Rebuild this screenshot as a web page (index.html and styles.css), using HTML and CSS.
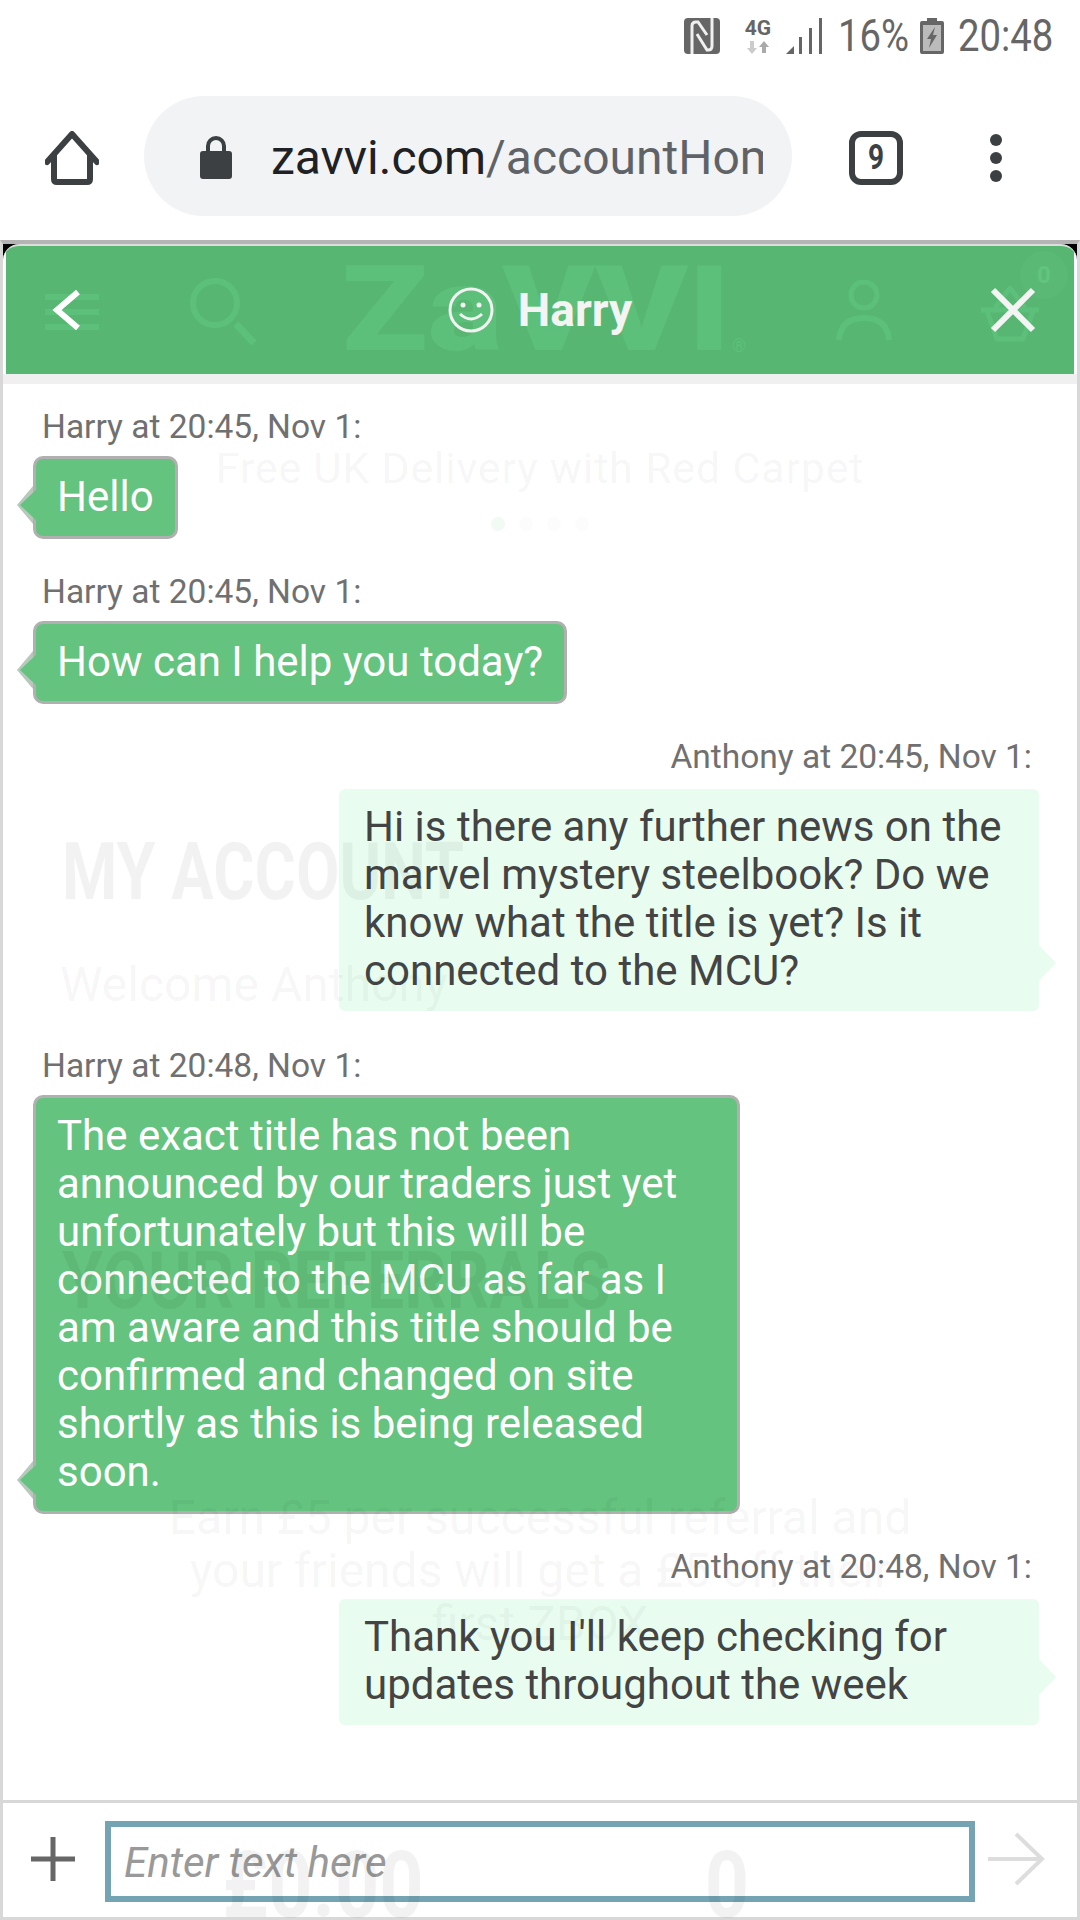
FILE: index.html
```html
<!DOCTYPE html>
<html lang="en">

<head>
  <meta charset="UTF-8">
  <meta name="viewport" content="width=device-width, initial-scale=1.0">
  <title>Zavvi chat</title>
  <link rel="stylesheet" href="styles.css">
</head>

<body>
  <div class="phone">
    <div class="status-bar">
      <svg class="nfc-icon" width="36" height="36" viewBox="0 0 36 36">
        <rect width="36" height="36" rx="4" fill="#666"/>
        <path d="M8 36V8q0-4 4-4h2l9 13" fill="none" stroke="#f0f0f0" stroke-width="3"/>
        <path d="M28 0v28q0 4-4 4h-1L13 16" fill="none" stroke="#f0f0f0" stroke-width="3"/>
      </svg>
      <div class="net-icon">
        <span class="net-label">4G</span>
        <svg width="24" height="13" viewBox="0 0 24 13">
          <path d="M6 13L1 7h3V0h4v7h3z" fill="#ccc"/>
          <path d="M18 0l5 6h-3v6h-4V6h-3z" fill="#aaa"/>
        </svg>
      </div>
      <svg class="signal-icon" width="36" height="36" viewBox="0 0 36 36">
        <path d="M0 36L8 28V36z" fill="#666"/>
        <rect x="13" y="19" width="3" height="17" fill="#666"/>
        <rect x="23" y="10" width="3" height="26" fill="#666"/>
        <rect x="33" y="0" width="3" height="36" fill="#666"/>
      </svg>
      <span class="status-text pct">16%</span>
      <svg class="battery-icon" width="24" height="36" viewBox="0 0 24 36">
        <path d="M7 0h10v3h5q2 0 2 2v29q0 2-2 2H2q-2 0-2-2V5q0-2 2-2h5z" fill="#666"/>
        <rect x="3" y="7" width="18" height="26" fill="#bbb"/>
        <path d="M15 9L7 21h4l-2 9 8-13h-4z" fill="#666"/>
      </svg>
      <span class="status-text time">20:48</span>
    </div>

    <div class="toolbar">
      <svg class="home-icon" width="54" height="54" viewBox="0 0 54 54">
        <path d="M2 31L27 3l25 28M9 24v24q0 3 3 3h30q3 0 3-3V24" fill="none" stroke="#3c4043" stroke-width="6" stroke-linecap="round" stroke-linejoin="round"/>
      </svg>
      <div class="omnibox">
        <svg class="lock-icon" width="32" height="43" viewBox="0 0 32 43">
          <path d="M8 17V10a8 8 0 0 1 16 0v7" fill="none" stroke="#3c4043" stroke-width="4"/>
          <rect y="15" width="32" height="28" rx="3" fill="#3c4043"/>
        </svg>
        <div class="url"><span class="url-host">zavvi.com</span>/accountHome</div>
      </div>
      <div class="tab-count"><span>9</span></div>
      <div class="menu-dots"><span></span><span></span><span></span></div>
    </div>

    <div class="widget">
      <div class="chat">
        <div class="chat-head">
          <div class="ghost-nav">
            <div class="ghost-burger"><span></span><span></span><span></span></div>
            <svg class="ghost-search" width="66" height="68" viewBox="0 0 66 68">
              <circle cx="25" cy="25" r="22" fill="none" stroke="#5dc07a" stroke-width="6"/>
              <path d="M46 46l18 19" stroke="#5dc07a" stroke-width="7"/>
            </svg>
            <div class="ghost-logo">ZaVVI</div>
            <div class="ghost-reg">®</div>
            <svg class="ghost-person" width="56" height="64" viewBox="0 0 56 64">
              <circle cx="28" cy="15" r="13" fill="none" stroke="#5dc07a" stroke-width="5"/>
              <path d="M3 60q2-22 25-22t25 22" fill="none" stroke="#5dc07a" stroke-width="6"/>
            </svg>
            <svg class="ghost-basket" width="62" height="56" viewBox="0 0 62 56">
              <path d="M2 24h58M8 25l10 28h26l10-28M16 22L31 2l15 20" fill="none" stroke="#5dc07a" stroke-width="5"/>
            </svg>
            <div class="ghost-badge">0</div>
          </div>
          <svg class="back-icon" width="30" height="42" viewBox="0 0 30 42">
            <path d="M26 3L5 21l21 18" fill="none" stroke="#fff" stroke-width="6"/>
          </svg>
          <div class="agent">
            <svg class="smile-icon" width="46" height="46" viewBox="0 0 46 46">
              <circle cx="23" cy="23" r="21" fill="none" stroke="#f2f2f2" stroke-width="3"/>
              <circle cx="15" cy="18" r="2.5" fill="#f2f2f2"/>
              <circle cx="31" cy="18" r="2.5" fill="#f2f2f2"/>
              <path d="M12 27q11 10 22 0" fill="none" stroke="#f2f2f2" stroke-width="3"/>
            </svg>
            <span class="agent-name">Harry</span>
          </div>
          <svg class="close-icon" width="46" height="46" viewBox="0 0 46 46">
            <path d="M3 3l40 40M43 3L3 43" stroke="#f4f4f4" stroke-width="6"/>
          </svg>
        </div>

        <div class="head-band"></div>

        <div class="messages">
          <div class="msg agent-msg">
            <div class="msg-label">Harry at 20:45, Nov 1:</div>
            <div class="bubble">Hello</div>
          </div>
          <div class="msg agent-msg">
            <div class="msg-label">Harry at 20:45, Nov 1:</div>
            <div class="bubble">How can I help you today?</div>
          </div>
          <div class="msg user-msg">
            <div class="msg-label">Anthony at 20:45, Nov 1:</div>
            <div class="bubble">Hi is there any further news on the marvel mystery steelbook? Do we know what the title is yet? Is it connected to the MCU?</div>
          </div>
          <div class="msg agent-msg">
            <div class="msg-label">Harry at 20:48, Nov 1:</div>
            <div class="bubble">The exact title has not been announced by our traders just yet unfortunately but this will be connected to the MCU as far as I am aware and this title should be confirmed and changed on site shortly as this is being released soon.</div>
          </div>
          <div class="msg user-msg">
            <div class="msg-label">Anthony at 20:48, Nov 1:</div>
            <div class="bubble">Thank you I'll keep checking for updates throughout the week</div>
          </div>
        </div>

        <div class="composer">
          <svg class="plus-icon" width="44" height="44" viewBox="0 0 44 44">
            <path d="M0 22h44M22 0v44" stroke="#666" stroke-width="5"/>
          </svg>
          <div class="text-input">Enter text here</div>
          <svg class="send-icon" width="58" height="56" viewBox="0 0 58 56">
            <path d="M1 28h54M29 3l26 25-26 25" fill="none" stroke="#ddd" stroke-width="4"/>
          </svg>
        </div>
      </div>

      <!-- the account page showing faintly through the chat window -->
      <div class="ghost-page">
        <div class="ghost-promo">Free UK Delivery with Red Carpet</div>
        <div class="ghost-dots"><span></span><span></span><span></span><span></span></div>
        <div class="ghost-heading account-heading">MY ACCOUNT</div>
        <div class="ghost-welcome">Welcome Anthony</div>
        <div class="ghost-heading referral-heading">YOUR REFERRALS</div>
        <div class="ghost-earn">Earn £5 per successful referral and<br>your friends will get a £5 off their<br>first ZBOX</div>
        <div class="ghost-totals">
          <span>£0.00</span>
          <span>0</span>
        </div>
      </div>
    </div>
  </div>
</body>

</html>
```

FILE: styles.css
```css
* {
  box-sizing: border-box;
}

body {
  margin: 0;
  background-color: #fff;
  font-family: Roboto, "Liberation Sans", sans-serif;
}

.phone {
  display: flex;
  flex-direction: column;
  width: 1080px;
  height: 1920px;
  overflow: hidden;
}

/* status bar */
.status-bar {
  display: flex;
  align-items: center;
  height: 75px;
  padding: 0 27px 3px 0;
  justify-content: flex-end;
  flex-shrink: 0;
}

.nfc-icon {
  margin-right: 24px;
}

.net-icon {
  display: flex;
  flex-direction: column;
  align-items: center;
  width: 28px;
  margin-right: 14px;
}

.net-label {
  font-size: 21px;
  line-height: 19px;
  font-weight: 700;
  color: #666;
  margin-bottom: 3px;
}

.signal-icon {
  margin-right: 16px;
}

.status-text {
  color: #666;
  font-size: 44px;
  line-height: 44px;
  display: inline-block;
  transform: scaleX(0.87);
}

.pct {
  width: 69px;
  margin-right: 13px;
  transform-origin: left center;
  white-space: nowrap;
}

.time {
  width: 95px;
  margin-left: 14px;
  transform-origin: left center;
}

/* browser toolbar */
.toolbar {
  display: flex;
  align-items: center;
  height: 165px;
  flex-shrink: 0;
  padding: 0 0 0 45px;
}

.omnibox {
  display: flex;
  align-items: center;
  width: 648px;
  height: 120px;
  margin: 0 0 4px 45px;
  padding-left: 56px;
  border-radius: 60px;
  background-color: #f1f3f4;
}

.lock-icon {
  margin-top: 4px;
}

.url {
  width: 492px;
  margin: 4px 0 0 39px;
  overflow: hidden;
  white-space: nowrap;
  font-size: 48px;
  color: #5f6368;
}

.url-host {
  color: #202124;
}

.tab-count {
  display: flex;
  align-items: center;
  justify-content: center;
  width: 54px;
  height: 54px;
  margin-left: 57px;
  border: 6px solid #3c4043;
  border-radius: 12px;
  font-size: 35px;
  font-weight: 700;
  color: #3c4043;
}

.tab-count span {
  transform: scaleX(0.8);
}

.menu-dots {
  display: flex;
  flex-direction: column;
  gap: 6px;
  margin-left: 87px;
}

.menu-dots span {
  width: 12px;
  height: 12px;
  border-radius: 50%;
  background-color: #3c4043;
}

/* chat window */
.widget {
  position: relative;
  flex: 1;
  border-top: 4px solid #b4b4b4;
  border-left: 3px solid #d8d8d8;
  border-right: 3px solid #d8d8d8;
  border-bottom: 3px solid #d8d8d8;
  background: linear-gradient(#000 0 16px, #fff 16px);
}

.chat {
  display: flex;
  flex-direction: column;
  height: 100%;
  border-top: 2px solid #ddd;
  border-radius: 16px 16px 0 0;
  overflow: hidden;
  background-color: #fff;
}

.chat-head {
  position: relative;
  display: flex;
  align-items: center;
  justify-content: space-between;
  height: 128px;
  flex-shrink: 0;
  margin: 0 3px;
  padding: 0 38px 0 46px;
  background-color: #57b672;
}

.back-icon,
.close-icon,
.agent {
  position: relative;
}

.agent {
  display: flex;
  align-items: center;
  gap: 24px;
  margin-left: 8px;
}

.agent-name {
  font-size: 46px;
  font-weight: 700;
  color: #f4f4f4;
}

/* the shop header behind the chat header */
.ghost-nav {
  position: absolute;
  inset: 0;
}

.ghost-burger {
  position: absolute;
  left: 39px;
  top: 48px;
  display: flex;
  flex-direction: column;
  gap: 9px;
}

.ghost-burger span {
  width: 54px;
  height: 6px;
  background-color: #5dc07a;
}

.ghost-search {
  position: absolute;
  left: 184px;
  top: 32px;
}

.ghost-logo {
  position: absolute;
  left: 336px;
  top: 0;
  font-size: 118px;
  line-height: 128px;
  font-weight: 900;
  color: #5dc07a;
  transform: scaleX(1.19);
  transform-origin: left center;
}

.ghost-reg {
  position: absolute;
  left: 726px;
  top: 88px;
  font-size: 18px;
  line-height: 24px;
  color: #5dc07a;
}

.ghost-person {
  position: absolute;
  left: 830px;
  top: 34px;
}

.ghost-basket {
  position: absolute;
  left: 973px;
  top: 40px;
}

.ghost-badge {
  position: absolute;
  left: 1014px;
  top: 5px;
  width: 48px;
  height: 48px;
  border-radius: 50%;
  background-color: #5aba75;
  text-align: center;
  font-size: 24px;
  line-height: 48px;
  font-weight: 700;
  color: #62c47e;
}

.head-band {
  height: 10px;
  flex-shrink: 0;
  background-color: #f0f0f0;
}

.messages {
  flex: 1;
  display: flex;
  flex-direction: column;
  padding: 23px 38px 0 30px;
}

.msg {
  display: flex;
  flex-direction: column;
  margin-bottom: 33px;
}

.msg-label {
  font-size: 33.5px;
  line-height: 40px;
  color: #707070;
}

.bubble {
  position: relative;
  font-size: 42px;
  line-height: 48px;
}

.agent-msg {
  align-items: flex-start;
}

.agent-msg .msg-label {
  margin: 0 0 9px 9px;
}

.agent-msg .bubble {
  max-width: 707px;
  padding: 14px 21px 15px;
  border: 3px solid #b0b0b0;
  border-radius: 10px;
  background-color: #64c37e;
  color: #fff;
}

/* tail pointing at the agent */
.agent-msg .bubble::before {
  content: "";
  position: absolute;
  left: -19px;
  bottom: 12px;
  width: 16px;
  height: 38px;
  background-color: #b8c8bc;
  clip-path: polygon(100% 0, 0 50%, 100% 100%);
}

.agent-msg .bubble::after {
  content: "";
  position: absolute;
  left: -16px;
  bottom: 15px;
  width: 17px;
  height: 32px;
  background-color: #64c37e;
  clip-path: polygon(100% 0, 0 50%, 100% 100%);
}

.user-msg {
  align-items: flex-end;
  margin-bottom: 35px;
}

.user-msg .msg-label {
  margin: 0 7px 12px 0;
}

.user-msg .bubble {
  max-width: 700px;
  padding: 14px 25px 16px;
  border-radius: 6px;
  background-color: #e8fdf0;
  color: #444;
}

.user-msg .bubble::after {
  content: "";
  position: absolute;
  right: -17px;
  bottom: 30px;
  width: 17px;
  height: 36px;
  background-color: #e8fdf0;
  clip-path: polygon(0 0, 100% 50%, 0 100%);
}

/* bottom input row */
.composer {
  display: flex;
  align-items: center;
  height: 117px;
  flex-shrink: 0;
  padding: 0 0 3px 28px;
  border-top: 3px solid #d8d8d8;
}

.text-input {
  width: 870px;
  height: 81px;
  margin: 6px 12px 0 30px;
  padding: 0 13px;
  border: 6px solid #74a4b4;
  font-size: 42px;
  line-height: 72px;
  font-style: italic;
  color: #999;
}

/* faded page layer */
.ghost-page {
  position: absolute;
  top: 140px;
  left: -3px;
  width: 1080px;
  height: 1536px;
  overflow: hidden;
  pointer-events: none;
  color: rgba(0, 0, 0, 0.05);
}

.ghost-promo {
  margin-top: 59px;
  text-align: center;
  font-size: 43px;
  line-height: 50px;
  letter-spacing: 0.8px;
}

.ghost-dots {
  display: flex;
  justify-content: center;
  gap: 14px;
  margin-top: 24px;
}

.ghost-dots span {
  width: 14px;
  height: 14px;
  border-radius: 50%;
  background-color: rgba(0, 0, 0, 0.012);
}

.ghost-dots span:first-child {
  background-color: rgba(90, 190, 120, 0.08);
}

.ghost-heading {
  margin-left: 62px;
  font-size: 79px;
  line-height: 80px;
  font-weight: 700;
  white-space: nowrap;
  transform: scaleX(0.8);
  transform-origin: left center;
}

.account-heading {
  margin-top: 301px;
}

.ghost-welcome {
  margin: 48px 0 0 60px;
  font-size: 48px;
  line-height: 50px;
}

.referral-heading {
  margin-top: 231px;
  transform: scaleX(0.84);
}

.ghost-earn {
  margin-top: 170px;
  text-align: center;
  font-size: 48px;
  line-height: 53px;
}

.ghost-totals {
  display: grid;
  grid-template-columns: 404px 404px;
  padding-left: 121px;
  margin-top: 190px;
  text-align: center;
  font-size: 92px;
  line-height: 92px;
  font-weight: 700;
}

.ghost-totals span {
  transform: scaleX(0.84);
}
```
